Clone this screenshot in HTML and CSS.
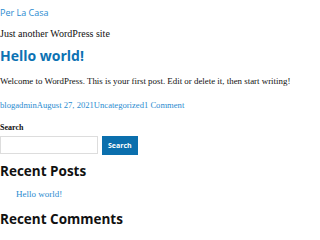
FILE: index.html
```html
<!DOCTYPE html>
<html lang="en">
<head>
    <meta charset="UTF-8">
    <meta name="viewport" content="width=device-width, initial-scale=1.0">
    <title>Per La Casa</title>
    <link rel="stylesheet" href="styles.css">
</head>
<body>
    <header class="site-header">
        <p class="site-title"><a href="#">Per La Casa</a></p>
        <p class="site-description">Just another WordPress site</p>
    </header>

    <main class="site-main">
        <article class="post">
            <h2 class="entry-title"><a href="#">Hello world!</a></h2>
            <div class="entry-content">
                <p>Welcome to WordPress. This is your first post. Edit or delete it, then start writing!</p>
            </div>
            <div class="entry-meta"><a href="#">blogadmin</a><a href="#">August 27, 2021</a><a href="#">Uncategorized</a><a href="#">1 Comment</a></div>
        </article>
    </main>

    <aside class="sidebar">
        <form class="search-form">
            <label class="search-label" for="s">Search</label>
            <div class="search-row">
                <input type="text" id="s" class="search-input">
                <button type="submit" class="search-button">Search</button>
            </div>
        </form>

        <section class="widget">
            <h2 class="widget-title">Recent Posts</h2>
            <ul class="widget-list">
                <li><a href="#">Hello world!</a></li>
            </ul>
        </section>

        <section class="widget">
            <h2 class="widget-title">Recent Comments</h2>
        </section>
    </aside>
</body>
</html>
```

FILE: styles.css
```css
body {
    margin: 0;
    font-family: "Liberation Serif", serif;
    font-size: 9px;
    color: #111;
    background: #fff;
}

a {
    color: #2a8bd0;
    text-decoration: none;
}

p {
    margin: 0;
}

.site-header {
    padding-top: 6px;
}

.site-title {
    font-family: "Open Sans", sans-serif;
    font-size: 9px;
    line-height: 14px;
}

.site-description {
    margin-top: 8px;
    font-size: 10px;
    line-height: 12px;
}

.entry-title {
    margin: 7px 0 0;
    font-family: "Open Sans", sans-serif;
    font-size: 14px;
    line-height: 18px;
}

.entry-title a {
    color: #0c72b3;
}

.entry-content p {
    margin-top: 10px;
    font-size: 8.9px;
    line-height: 12px;
}

.entry-meta {
    margin-top: 12px;
    font-size: 8.6px;
    line-height: 12px;
}

.sidebar {
    margin-top: 12px;
}

.search-label {
    display: block;
    font-weight: bold;
    font-size: 8px;
    line-height: 10px;
}

.search-row {
    display: flex;
    gap: 4px;
    margin-top: 3px;
}

.search-input {
    width: 98px;
    height: 18px;
    box-sizing: border-box;
    border: 1px solid #ddd;
    margin: 0;
    padding: 0 4px;
}

.search-button {
    height: 19px;
    padding: 0 6px;
    border: none;
    background: #0b6fad;
    color: #fff;
    font-family: "Open Sans", sans-serif;
    font-weight: bold;
    font-size: 7px;
}

.widget-title {
    margin: 7px 0 0;
    font-family: "Open Sans", sans-serif;
    font-size: 13.5px;
    line-height: 18px;
    color: #111;
}

.widget-list {
    margin: 8px 0 0;
    padding-left: 16px;
    list-style: none;
    line-height: 12px;
}

.widget + .widget .widget-title {
    margin-top: 10px;
}
```
